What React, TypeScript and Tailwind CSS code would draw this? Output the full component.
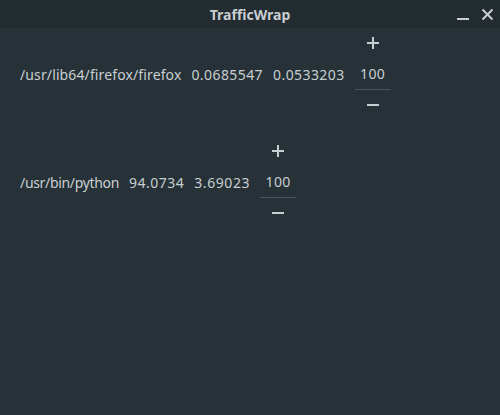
import React from "react";

function Plus() {
  return (
    <svg width="12" height="12" viewBox="0 0 12 12">
      <rect x="5" y="0" width="2" height="12" fill="#c9ced1" />
      <rect x="0" y="5" width="12" height="2" fill="#c9ced1" />
    </svg>
  );
}
function Minus() {
  return (
    <svg width="12" height="12" viewBox="0 0 12 12">
      <rect x="0" y="5" width="12" height="2" fill="#c9ced1" />
    </svg>
  );
}

function Row({ cols, value }: { cols: { t: string; c: string }[]; value: string }) {
  return (
    <div className="flex items-center gap-[10px] pl-[20px]">
      {cols.map((c, i) => (
        <span key={i} className={"text-[14px] text-[#c9ced1] whitespace-nowrap " + c.c}>
          {c.t}
        </span>
      ))}
      <div className="flex flex-col items-center w-[36px]">
        <div className="h-[30px] flex items-center justify-center">
          <Plus />
        </div>
        <div className="h-[32px] w-[36px] flex items-center justify-center border-b border-[#4b565c] text-[14px] tracking-[0.4px] text-[#c9ced1]">
          {value}
        </div>
        <div className="h-[30px] flex items-center justify-center">
          <Minus />
        </div>
      </div>
    </div>
  );
}

export default function App() {
  return (
    <div
      className="w-[500px] h-[415px] bg-[#263238] flex flex-col"
      style={{ fontFamily: '"Noto Sans", "Open Sans", sans-serif' }}
    >
      <div className="h-[28px] bg-[#232c31] relative flex items-center justify-center">
        <span className="text-[14px] font-bold text-[#c9ced1]">TrafficWrap</span>
        <div className="absolute right-[6px] top-0 h-[28px] flex items-center gap-[11px]">
          <svg width="13" height="13" viewBox="0 0 13 13">
            <rect x="0" y="10" width="12" height="2" fill="#c9ced1" />
          </svg>
          <svg width="13" height="13" viewBox="0 0 13 13">
            <path d="M1.5 1.5 L11.5 11.5 M11.5 1.5 L1.5 11.5" stroke="#c9ced1" strokeWidth="2" />
          </svg>
        </div>
      </div>
      <div className="flex flex-col gap-[16px]">
        <Row
          cols={[
            { t: "/usr/lib64/firefox/firefox", c: "tracking-[0.12px]" },
            { t: "0.0685547", c: "tracking-[0.42px]" },
            { t: "0.0533203", c: "tracking-[0.42px]" },
          ]}
          value="100"
        />
        <Row
          cols={[
            { t: "/usr/bin/python", c: "tracking-[-0.33px]" },
            { t: "94.0734", c: "tracking-[0.48px]" },
            { t: "3.69023", c: "tracking-[0.6px]" },
          ]}
          value="100"
        />
      </div>
    </div>
  );
}
